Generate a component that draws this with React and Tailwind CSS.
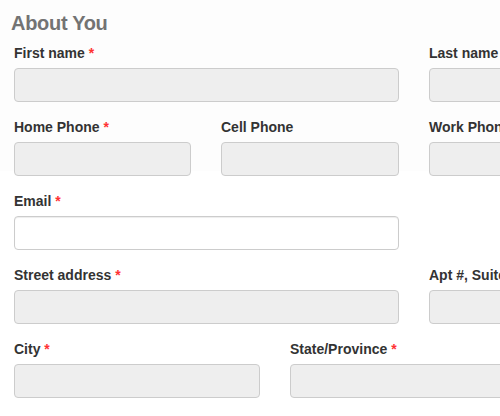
import React from "react";

function Label({ children, req }) {
  return (
    <label className="block h-[20px] pt-[1px] leading-[20px] text-[14px] font-bold text-[#333] whitespace-nowrap">
      {children}
      {req && <span className="text-[#f33]"> *</span>}
    </label>
  );
}

function Field({ label, req, white, className = "" }) {
  return (
    <div className={"flex flex-col " + className}>
      <Label req={req}>{label}</Label>
      <div
        className={
          "mt-[6px] h-[34px] rounded-[4px] border border-[#ccc] " +
          (white
            ? "bg-white shadow-[inset_0_1px_1px_rgba(0,0,0,0.075)]"
            : "bg-[#eee]")
        }
      />
    </div>
  );
}

export default function App() {
  return (
    <div
      className="w-[500px] h-[416px] overflow-hidden bg-[linear-gradient(#fdfdfd_171px,#ffffff_171px)]"
      style={{ fontFamily: '"Liberation Sans", Arial, sans-serif' }}
    >
      <div className="w-[700px] pl-[14px]">
        <h2 className="-ml-[3px] pt-[9px] h-[42px] text-[20px] leading-[28px] font-bold text-[#737373] tracking-[-0.3px]">
          About You
        </h2>
        <div className="grid grid-cols-[177px_178px_178px] gap-x-[30px] gap-y-[14px]">
          <Field label="First name" req className="col-span-2" />
          <Field label="Last name" req />
          <Field label="Home Phone" req />
          <Field label="Cell Phone" />
          <Field label="Work Phone" />
          <Field label="Email" req white className="col-span-2" />
          <div />
          <Field label="Street address" req className="col-span-2" />
          <Field label="Apt #, Suite" />
        </div>
        <div className="mt-[14px] flex gap-x-[30px]">
          <Field label="City" req className="w-[246px]" />
          <Field label="State/Province" req className="w-[246px]" />
        </div>
      </div>
    </div>
  );
}
